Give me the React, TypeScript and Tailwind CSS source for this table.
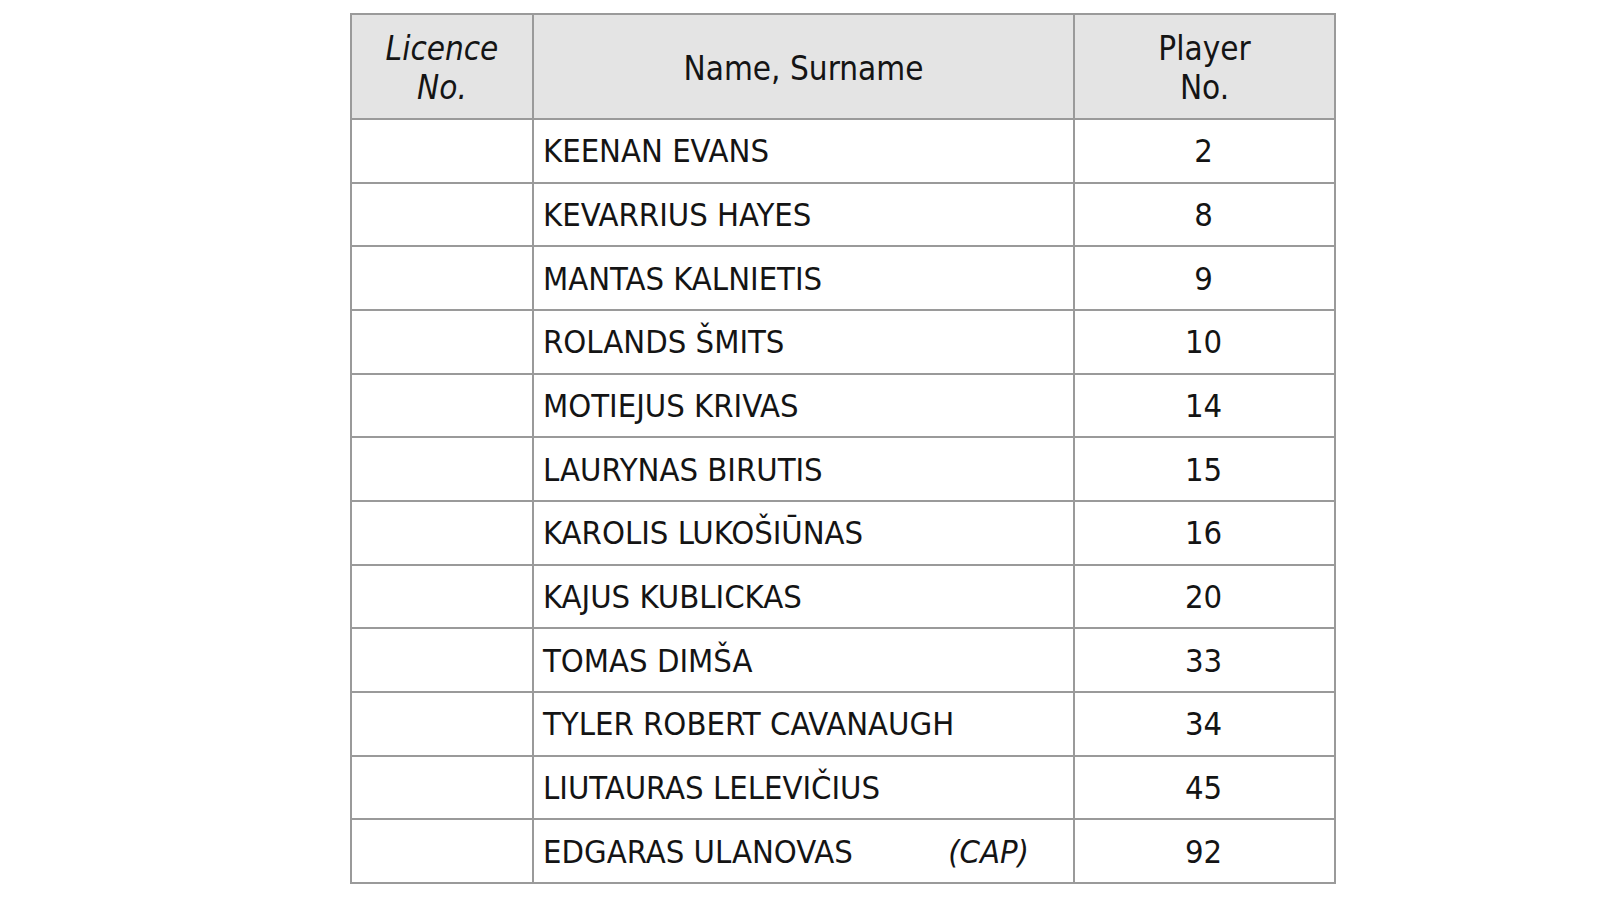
import React from "react";

const players: [string, string, boolean?][] = [
  ["KEENAN EVANS", "2"],
  ["KEVARRIUS HAYES", "8"],
  ["MANTAS KALNIETIS", "9"],
  ["ROLANDS ŠMITS", "10"],
  ["MOTIEJUS KRIVAS", "14"],
  ["LAURYNAS BIRUTIS", "15"],
  ["KAROLIS LUKOŠIŪNAS", "16"],
  ["KAJUS KUBLICKAS", "20"],
  ["TOMAS DIMŠA", "33"],
  ["TYLER ROBERT CAVANAUGH", "34"],
  ["LIUTAURAS LELEVIČIUS", "45"],
  ["EDGARAS ULANOVAS", "92", true],
];

export default function App() {
  return (
    <div
      className="w-[1600px] h-[900px] bg-white overflow-hidden pl-[350px] pt-[13px] text-[#141414]"
      style={{ fontFamily: '"DejaVu Sans Condensed", "DejaVu Sans", sans-serif' }}
    >
      <div className="grid grid-cols-[182px_541px_261px] w-[986px] border-l-2 border-t-2 border-[#9a9a9a] text-[32.5px]">
        <div className="h-[105px] bg-[#e4e4e4] border-r-2 border-b-2 border-[#9a9a9a] flex flex-col items-center justify-center pt-[2px] leading-[39px] italic text-[33px]">
          <span>Licence</span>
          <span>No.</span>
        </div>
        <div className="h-[105px] bg-[#e4e4e4] border-r-2 border-b-2 border-[#9a9a9a] flex items-center justify-center pt-[4px] text-[33px]">
          Name, Surname
        </div>
        <div className="h-[105px] bg-[#e4e4e4] border-r-2 border-b-2 border-[#9a9a9a] flex flex-col items-center justify-center pt-[2px] leading-[39px] text-[33px]">
          <span>Player</span>
          <span>No.</span>
        </div>
        {players.map(([name, num, cap]) => (
          <React.Fragment key={name}>
            <div className="h-[63.67px] border-r-2 border-b-2 border-[#9a9a9a]" />
            <div className="h-[63.67px] border-r-2 border-b-2 border-[#9a9a9a] flex items-center pt-[2px] pl-[9px] pr-[44px]">
              <span>{name}</span>
              {cap && <span className="ml-auto italic">(CAP)</span>}
            </div>
            <div className="h-[63.67px] border-r-2 border-b-2 border-[#9a9a9a] flex items-center justify-center pt-[2px] pr-[2px]">
              {num}
            </div>
          </React.Fragment>
        ))}
      </div>
    </div>
  );
}
